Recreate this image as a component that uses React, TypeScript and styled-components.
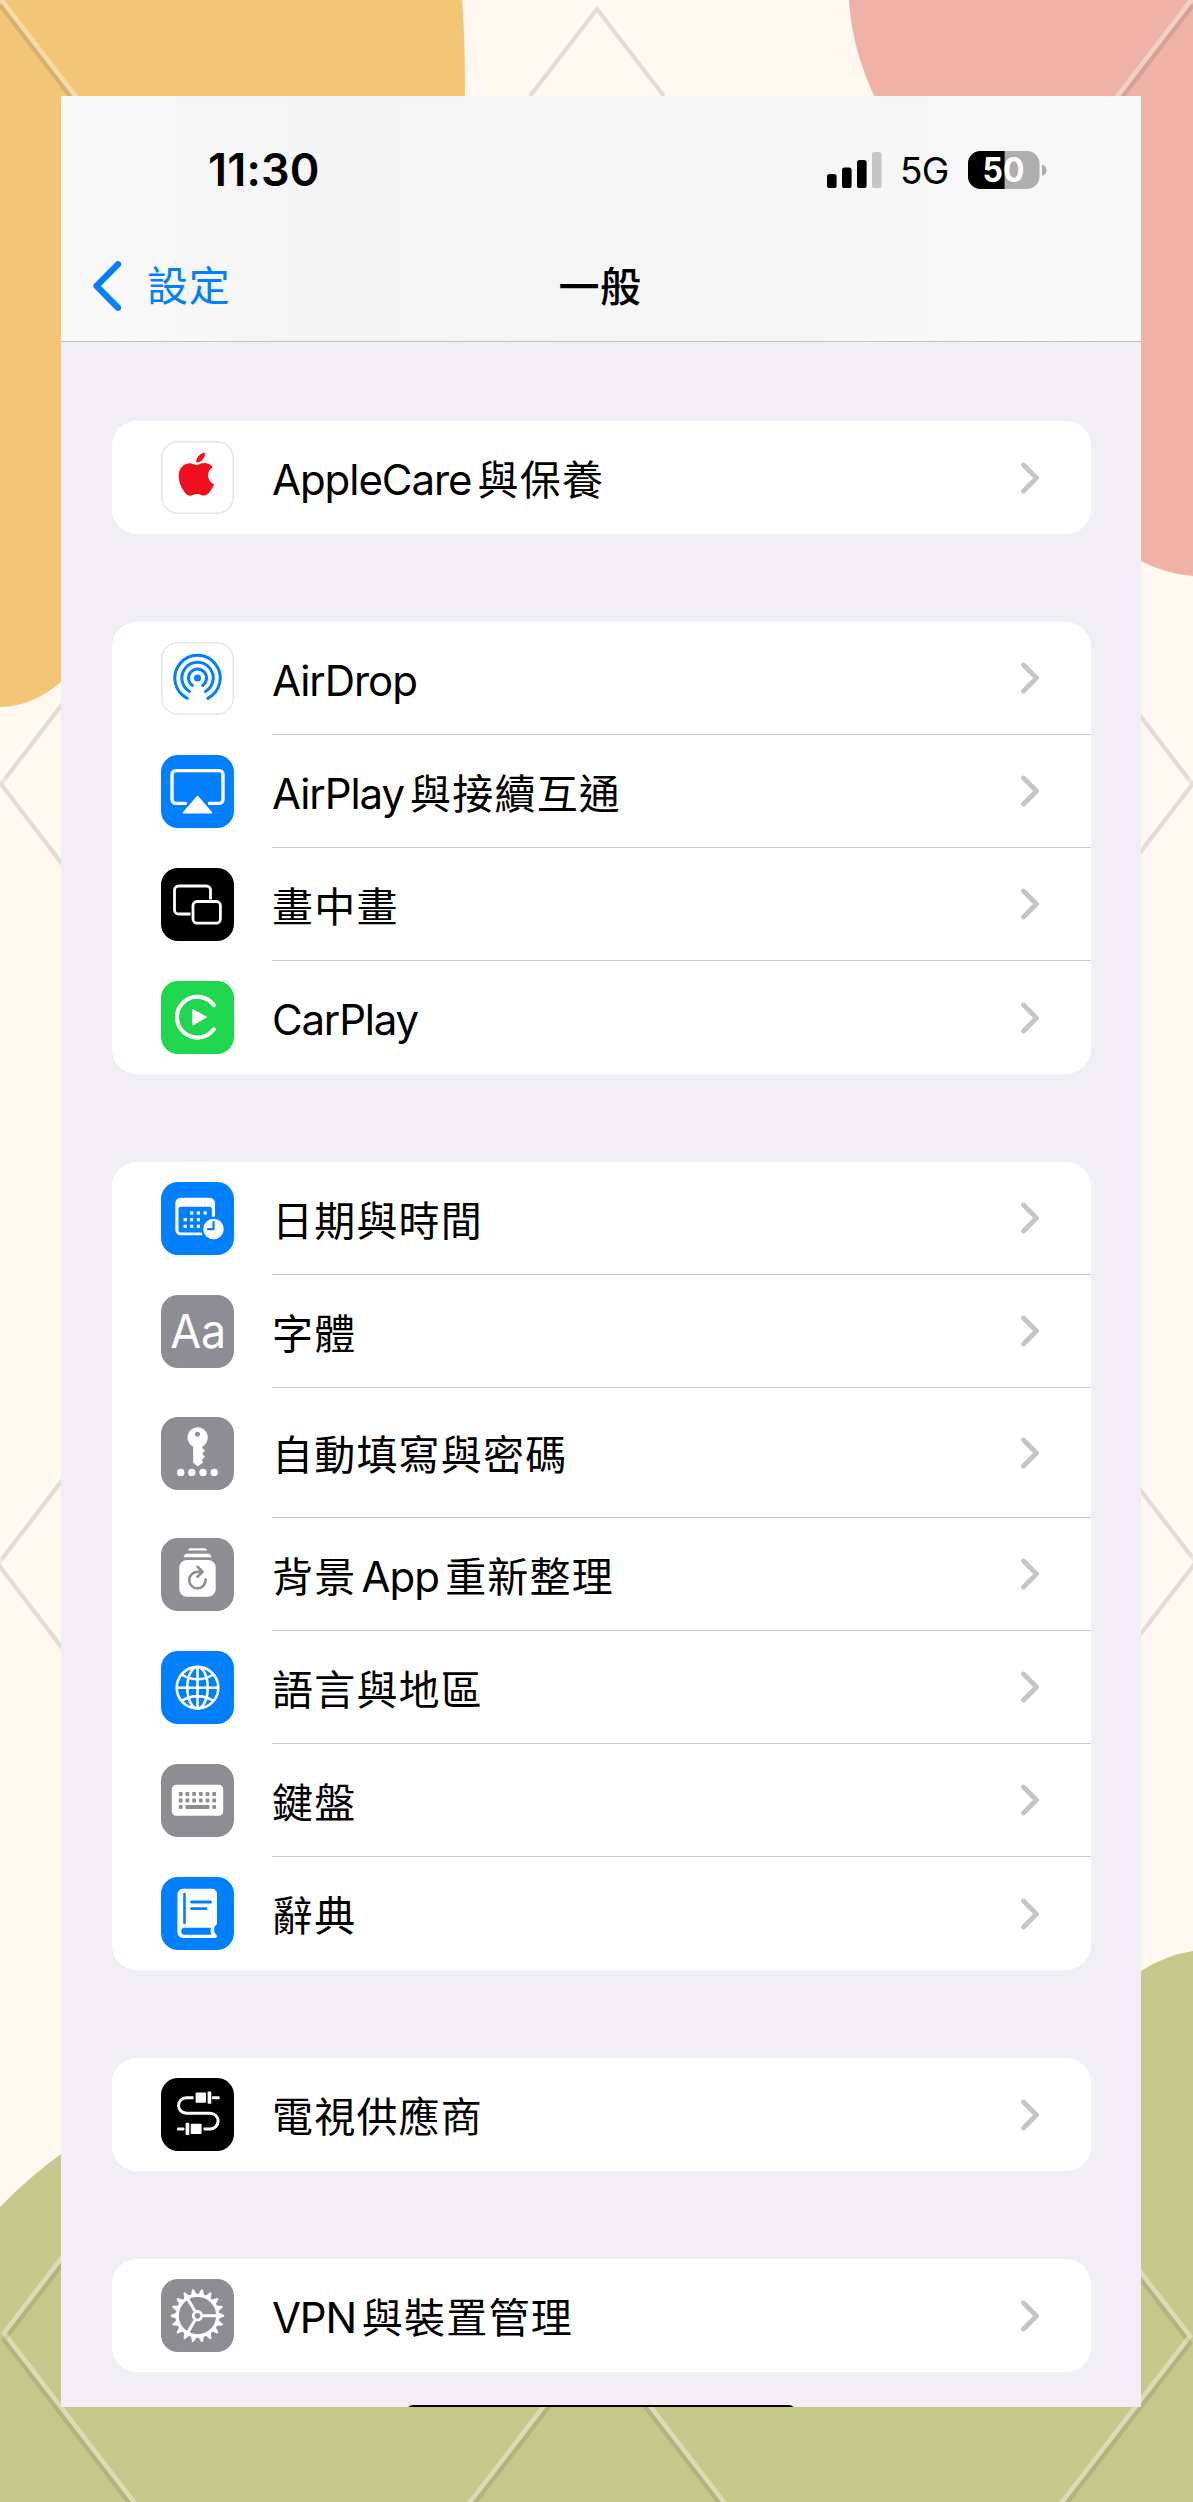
import React from "react";
import styled, { createGlobalStyle } from "styled-components";

const GlobalStyle = createGlobalStyle`
  * { box-sizing: border-box; }
  body { margin: 0; background: #fff7f0; }
`;

const sans = `Inter, "Noto Sans CJK TC", sans-serif`;

const Page = styled.div`
  position: relative;
  width: 1193px;
  height: 2502px;
  padding: 96px 52px 95px 61px;
  overflow: hidden;
  background: #fff7f0;
  font-family: ${sans};
  color: #000;
`;

const Backdrop = styled.svg`
  position: absolute;
  inset: 0;
  width: 1193px;
  height: 2502px;
`;

const Phone = styled.main`
  position: relative;
  display: flex;
  flex-direction: column;
  width: 1080px;
  height: 2311px;
  background: #f1eef5;
  overflow: hidden;
`;

const Header = styled.header`
  height: 246px;
  flex: none;
  background: linear-gradient(90deg, #f9f9f9 0, #f5f5f5 22%, #f6f6f6 70%, #f9f9fa 100%);
  border-bottom: 1px solid #bfbec4;
`;

const StatusBar = styled.div`
  display: flex;
  align-items: center;
  justify-content: space-between;
  height: 147px;
  padding: 0 93px 0 147px;
`;

const Clock = styled.div`
  font-size: 45px;
  font-weight: 600;
  letter-spacing: 0.2px;
  line-height: 60px;
`;

const StatusRight = styled.div`
  display: flex;
  align-items: center;
`;

const Network = styled.span`
  margin: 3px 0 0 18px;
  width: 68px;
  font-size: 37px;
  line-height: 44px;
  letter-spacing: -0.8px;
`;

const BatterySvg = styled.svg`
  overflow: visible;
`;

const NavBar = styled.nav`
  display: grid;
  grid-template-columns: 1fr auto 1fr;
  align-items: center;
  height: 86px;
  padding: 0 33px 0 31px;
`;

const Back = styled.a`
  display: flex;
  align-items: center;
  gap: 26px;
  color: #007fff;
  font-size: 41px;
  letter-spacing: 0.8px;
  line-height: 60px;
`;

const Title = styled.h1`
  margin: 2px 0 0;
  font-size: 41px;
  font-weight: 500;
  letter-spacing: 0.6px;
  line-height: 60px;
`;

const List = styled.div`
  display: flex;
  flex-direction: column;
  gap: 88px;
  padding: 79px 50px 0 51px;
`;

const Card = styled.section`
  border-radius: 25px;
  background: #fff;
  overflow: hidden;
`;

const Row = styled.div<{ $tall?: boolean }>`
  display: flex;
  align-items: center;
  height: ${(p) => (p.$tall ? 130 : 113)}px;
  padding-left: 49px;
`;

const Tile = styled.div<{ $bg: string; $outlined?: boolean }>`
  flex: none;
  width: 73px;
  height: 73px;
  border-radius: 17px;
  background: ${(p) => p.$bg};
  box-shadow: ${(p) => (p.$outlined ? "inset 0 0 0 1.5px #e6e6e8" : "none")};
  svg { display: block; width: 73px; height: 73px; }
`;

const RowBody = styled.div<{ $last?: boolean }>`
  display: flex;
  flex: 1;
  align-items: center;
  justify-content: space-between;
  height: 100%;
  margin-left: 38px;
  padding-right: 51px;
  border-bottom: ${(p) => (p.$last ? "none" : "1px solid #c9c9cb")};
`;

const Label = styled.div`
  padding-top: 5px;
  font-size: 41px;
  line-height: 60px;
  white-space: nowrap;
`;

const Cjk = styled.span`
  letter-spacing: 1.2px;
`;

const Latin = styled.span<{ $track: number; $before?: boolean }>`
  margin-left: ${(p) => (p.$before ? 5 : 0)}px;
  margin-right: 6px;
  font-size: 42px;
  letter-spacing: ${(p) => p.$track}px;
`;

const HomeIndicator = styled.div`
  width: 388px;
  height: 12px;
  margin: 33px auto 0;
  flex: none;
  border-radius: 6px;
  background: #000;
`;

const SignalIcon = () => (
  <svg width="55" height="36" viewBox="0 0 55 36">
    <rect x="0" y="22" width="9.6" height="14" rx="2.6" />
    <rect x="15" y="15.6" width="9.6" height="20.4" rx="2.6" />
    <rect x="30" y="8" width="9.6" height="28" rx="2.6" />
    <rect x="45" y="0" width="9.6" height="36" rx="2.6" fill="#c6c6c6" />
  </svg>
);

const BatteryIcon = () => (
  <BatterySvg width="80" height="38" viewBox="0 0 80 38">
    <defs>
      <clipPath id="charge"><rect width="36.6" height="38" /></clipPath>
    </defs>
    <rect width="71.5" height="38" rx="12.5" fill="#aeaeae" />
    <rect width="71.5" height="38" rx="12.5" clipPath="url(#charge)" />
    <path d="M74 13.4c6 1.6 6 9.8 0 11.4z" fill="#aeaeae" />
    <text x="14.5" y="31" fill="#fff" fontFamily="Inter, sans-serif" fontWeight="700" fontSize="34" textLength="42" lengthAdjust="spacingAndGlyphs">50</text>
  </BatterySvg>
);

const BackChevron = () => (
  <svg width="29" height="52" viewBox="0 0 29 52" fill="none" stroke="#007fff" strokeWidth="6.2" strokeLinecap="round" strokeLinejoin="round">
    <path d="M26 4.2 4.500 26 26 47.8" />
  </svg>
);

const Disclosure = () => (
  <svg width="20" height="32" viewBox="0 0 20 32" fill="none" stroke="#c5c5c8" strokeWidth="4.8" strokeLinecap="round" strokeLinejoin="round">
    <path d="M3.5 3 16.500 16 3.5 29" />
  </svg>
);

const AppleIcon = () => (
  <svg viewBox="0 0 73 73" fill="#ee101c">
    <path transform="translate(13.7 11.7) scale(1.8 1.79)" d="M12.152 6.896c-.948 0-2.415-1.078-3.960-1.040-2.040.027-3.910 1.183-4.961 3.014-2.117 3.675-.546 9.103 1.519 12.090 1.013 1.454 2.208 3.090 3.792 3.039 1.520-.065 2.090-.987 3.935-.987 1.831 0 2.350.987 3.960.948 1.637-.026 2.676-1.480 3.676-2.948 1.156-1.688 1.636-3.325 1.662-3.415-.039-.013-3.182-1.221-3.220-4.857-.026-3.040 2.480-4.494 2.597-4.559-1.429-2.090-3.623-2.324-4.390-2.376-2-.156-3.675 1.090-4.610 1.090zM15.530 3.830c.843-1.012 1.400-2.427 1.245-3.830-1.207.052-2.662.805-3.532 1.818-.780.896-1.454 2.338-1.273 3.714 1.338.104 2.715-.688 3.559-1.701" />
  </svg>
);

const AirDropIcon = () => (
  <svg viewBox="0 0 73 73" fill="none" stroke="#007fff" strokeWidth="3" strokeLinecap="round">
    <circle cx="36.5" cy="36" r="3.5" fill="#007fff" stroke="none" />
    <path d="M31.4 43.4a9 9 0 1 1 10.200 0" />
    <path d="M28.5 49.5a15.700 15.700 0 1 1 16 0" />
    <path d="M26.2 56.3a22.700 22.700 0 1 1 20.600 0" />
  </svg>
);

const AirPlayIcon = () => (
  <svg viewBox="0 0 73 73" fill="none" stroke="#fff" strokeWidth="3.4" strokeLinecap="round">
    <path d="M24.5 48.4H15a4 4 0 0 1-4-4V19.600a4 4 0 0 1 4-4h43a4 4 0 0 1 4 4v24.800a4 4 0 0 1-4 4h-9.500" />
    <path d="M36.5 41.5 50.500 57.800h-28z" fill="#fff" strokeWidth="1.6" strokeLinejoin="round" />
  </svg>
);

const PipIcon = () => (
  <svg viewBox="0 0 73 73" fill="none" stroke="#fff" strokeWidth="2.8" strokeLinecap="butt">
    <path d="M29.5 46H17.500a4 4 0 0 1-4-4V22a4 4 0 0 1 4-4H45.500a4 4 0 0 1 4 4v9.500" />
    <rect x="32" y="33.5" width="27.4" height="21.6" rx="4" />
  </svg>
);

const CarPlayIcon = () => (
  <svg viewBox="0 0 73 73" fill="none" stroke="#fff" strokeWidth="4.1" strokeLinecap="round">
    <path d="M52.8 24.1A20.400 20.400 0 1 0 52.800 48.300" />
    <path d="M31.8 28.8 45 36.200 31.800 43.600z" fill="#fff" strokeWidth="1.5" strokeLinejoin="round" />
  </svg>
);

const CalendarIcon = () => {
  const dots = [
    [30.7, 31], [37.4, 31], [44.2, 31],
    [24.2, 37.7], [30.7, 37.7], [37.4, 37.7],
    [24.2, 44.3], [30.7, 44.3], [37.4, 44.3],
  ];
  return (
    <svg viewBox="0 0 73 73">
      <rect x="14.3" y="15.7" width="39.7" height="37.6" rx="5.5" fill="#fff" />
      <rect x="17.5" y="24.8" width="33.4" height="25.8" rx="2.5" fill="#007fff" />
      {dots.map(([x, y]) => <rect key={`${x}-${y}`} x={x - 1.6} y={y - 1.6} width="3.2" height="3.2" fill="#fff" />)}
      <circle cx="52.5" cy="47" r="12.4" fill="#007fff" />
      <circle cx="52.5" cy="47" r="10.3" fill="#fff" />
      <path d="M52.5 40v7.200h-5.500" fill="none" stroke="#007fff" strokeWidth="2.2" strokeLinecap="round" strokeLinejoin="round" />
    </svg>
  );
};

const FontIcon = () => (
  <svg viewBox="0 0 73 73">
    <text x="9.2" y="53.3" fill="#fff" fontFamily="Inter, sans-serif" fontSize="46.500" textLength="56" lengthAdjust="spacingAndGlyphs">Aa</text>
  </svg>
);

const KeyIcon = () => (
  <svg viewBox="0 0 73 73" fill="#fff">
    <path fillRule="evenodd" d="M36.5 10.2a10.300 10.300 0 0 1 4.700 19.500v1.100l2.700 2.900-2.600 3 2.600 3-3 3.200 1.300 2.600-5.600 4-4.400-4V29.700A10.300 10.300 0 0 1 36.500 10.200zm0 4.600a2.500 2.500 0 1 0 0 5 2.500 2.500 0 0 0 0-5z" />
    {[19.7, 30.8, 42, 53.2].map((x) => <circle key={x} cx={x} cy="55.4" r="3.7" />)}
  </svg>
);

const RefreshIcon = () => (
  <svg viewBox="0 0 73 73" fill="#fff">
    <path d="M29.5 10.2h14c1.500 0 2.300 1 2.600 2.400H27c.3-1.400 1-2.400 2.500-2.400zM26 15.700h21c2 0 3 1.500 3.500 3.600h-28c.5-2.100 1.500-3.600 3.500-3.600z" />
    <rect x="18.3" y="22" width="36.4" height="36.7" rx="7.5" />
    <path d="M44.6 41.5a8.200 8.200 0 1 1-8.100-7.600h3" fill="none" stroke="#8e8d93" strokeWidth="2.6" strokeLinecap="round" />
    <path d="M36.5 28.8 41.600 33.800 36.500 38.800" fill="none" stroke="#8e8d93" strokeWidth="2.6" strokeLinecap="round" strokeLinejoin="round" />
  </svg>
);

const GlobeIcon = () => (
  <svg viewBox="0 0 73 73" fill="none" stroke="#fff" strokeWidth="2.6">
    <circle cx="36.5" cy="36.7" r="20.8" />
    <ellipse cx="36.5" cy="36.7" rx="10.2" ry="20.8" />
    <path d="M36.5 15.8v41.800M15.600 36.700h41.800M20.500 23.500q16 9.500 32 0M20.500 49.900q16-9.500 32 0" />
  </svg>
);

const KeyboardIcon = () => {
  const xs = [19.7, 26.4, 33.1, 39.8, 46.5, 53.2];
  return (
    <svg viewBox="0 0 73 73" fill="#8e8d93">
      <rect x="10.8" y="20.8" width="51.4" height="31" rx="4.5" fill="#fff" />
      {[30, 36.5].map((y) => xs.map((x) => <rect key={`${x}-${y}`} x={x - 1.9} y={y - 1.9} width="3.8" height="3.8" rx=".8" />))}
      <rect x="17.8" y="41.1" width="3.8" height="3.8" rx=".8" />
      <rect x="24.5" y="41.1" width="24" height="3.8" rx="1" />
      <rect x="51.3" y="41.1" width="3.8" height="3.8" rx=".8" />
    </svg>
  );
};

const BookIcon = () => (
  <svg viewBox="0 0 73 73" fill="none" strokeLinecap="round">
    <path d="M22 11.8h29a5 5 0 0 1 5 5V46.500c0 1.500-2.800 2.500-2.800 4.500v3.500c0 2 2.800 3 2.800 4.500 0 1.300-.8 2-2 2H22a5.600 5.600 0 0 1-5.600-5.600V17.400a5.600 5.600 0 0 1 5.600-5.600z" fill="#fff" />
    <path d="M23.7 50.7h26.500c-.8 1.200-.8 5.800.5 7H23.700a3.500 3.500 0 0 1 0-7z" fill="#007fff" />
    <path d="M23.5 17v29" stroke="#007fff" strokeWidth="2.6" />
    <path d="M30.5 25h19M30.500 31.700h14.500" stroke="#007fff" strokeWidth="2.8" />
  </svg>
);

const CableIcon = () => (
  <svg viewBox="0 0 73 73" fill="#fff">
    <path d="M32.5 19.7H25.300a7.700 7.700 0 0 0 0 15.500H49.200a7.900 7.900 0 0 1 0 15.800H42.500" fill="none" stroke="#fff" strokeWidth="3" />
    <rect x="34.6" y="14.6" width="10.4" height="10.2" rx="1" />
    <rect x="46.6" y="13.4" width="3.7" height="12.4" rx="1" />
    <rect x="51" y="18.2" width="7.6" height="3" rx="1" />
    <rect x="29.7" y="45.8" width="10.9" height="10.2" rx="1" />
    <rect x="24.6" y="44.7" width="3.7" height="12.4" rx="1" />
    <rect x="16" y="49.5" width="7.4" height="3" rx="1" />
  </svg>
);

const GearIcon = () => (
  <svg viewBox="0 0 73 73">
    <g transform="translate(36.5 36.7)" fill="none" stroke="#fff">
      {Array.from({ length: 18 }, (_, i) => (
        <path key={i} transform={`rotate(${i * 20})`} d="M20.5-3.2 25.600-1.200a1.200 1.200 0 0 1 0 2.400L20.500 3.200z" fill="#fff" stroke="none" />
      ))}
      <circle r="20.3" strokeWidth="3.4" />
      <circle r="4.2" strokeWidth="2.8" />
      {[0, 120, 240].map((a) => <path key={a} transform={`rotate(${a})`} d="M5 0H20" strokeWidth="3" />)}
    </g>
  </svg>
);

type Part = { text: string; track?: number };
type Item = { icon: React.ReactNode; bg: string; outlined?: boolean; tall?: boolean; parts: Part[] };

const blue = "#007fff";
const gray = "#8e8d93";

const groups: Item[][] = [
  [{ icon: <AppleIcon />, bg: "#fff", outlined: true, parts: [{ text: "AppleCare", track: -1.05 }, { text: "與保養" }] }],
  [
    { icon: <AirDropIcon />, bg: "#fff", outlined: true, parts: [{ text: "AirDrop", track: -1.05 }] },
    { icon: <AirPlayIcon />, bg: blue, parts: [{ text: "AirPlay", track: -1.05 }, { text: "與接續互通" }] },
    { icon: <PipIcon />, bg: "#000", parts: [{ text: "畫中畫" }] },
    { icon: <CarPlayIcon />, bg: "#1fd64f", parts: [{ text: "CarPlay", track: -1.2 }] },
  ],
  [
    { icon: <CalendarIcon />, bg: blue, parts: [{ text: "日期與時間" }] },
    { icon: <FontIcon />, bg: gray, parts: [{ text: "字體" }] },
    { icon: <KeyIcon />, bg: gray, tall: true, parts: [{ text: "自動填寫與密碼" }] },
    { icon: <RefreshIcon />, bg: gray, parts: [{ text: "背景" }, { text: "App", track: -0.9 }, { text: "重新整理" }] },
    { icon: <GlobeIcon />, bg: blue, parts: [{ text: "語言與地區" }] },
    { icon: <KeyboardIcon />, bg: gray, parts: [{ text: "鍵盤" }] },
    { icon: <BookIcon />, bg: blue, parts: [{ text: "辭典" }] },
  ],
  [{ icon: <CableIcon />, bg: "#000", parts: [{ text: "電視供應商" }] }],
  [{ icon: <GearIcon />, bg: gray, parts: [{ text: "VPN", track: -1.2 }, { text: "與裝置管理" }] }],
];

const lattice =
  "M530 89 597 2 664 89M0-2 80 102M1193-2 1113 102M70 687 1 777 70 867M1132 698 1192.500 777 1132 856M70 1463-2 1557 70 1651M1132 1472 1196 1555 1132 1638M70 2247 4 2333 140 2510M1132 2261 1190 2336 1056 2510M464 2510 597 2337 730 2510";

const Wallpaper = () => (
  <Backdrop viewBox="0 0 1193 2502">
    <path d="M0 0H462C465 40 465 70 465 110L400 600 61 682C42 698 22 707 0 707z" fill="#f3c577" />
    <path d="M849 0C851 34 860 68 881 110L1000 420 1141 561Q1166 574 1193 576V0z" fill="#eeb3a6" />
    <path d="M0 2207Q28 2178 61 2154L500 2000 1100 2000 1141 1971Q1166 1955 1193 1951V2502H0z" fill="#c3c98a" />
    <path d={lattice} transform="translate(0 7)" fill="none" stroke="rgba(70,60,60,.15)" strokeWidth="4.4" />
    <path d={lattice} fill="none" stroke="rgba(255,255,245,.38)" strokeWidth="4.6" />
  </Backdrop>
);

const App = () => (
  <>
    <GlobalStyle />
    <Page>
      <Wallpaper />
      <Phone>
        <Header>
          <StatusBar>
            <Clock>11:30</Clock>
            <StatusRight>
              <SignalIcon />
              <Network>5G</Network>
              <BatteryIcon />
            </StatusRight>
          </StatusBar>
          <NavBar>
            <Back><BackChevron />設定</Back>
            <Title>一般</Title>
          </NavBar>
        </Header>
        <List>
          {groups.map((items, g) => (
            <Card key={g}>
              {items.map((item, i) => (
                <Row key={i} $tall={item.tall}>
                  <Tile $bg={item.bg} $outlined={item.outlined}>{item.icon}</Tile>
                  <RowBody $last={i === items.length - 1}>
                    <Label>
                      {item.parts.map((p, n) =>
                        p.track !== undefined
                          ? <Latin key={n} $track={p.track} $before={n > 0}>{p.text}</Latin>
                          : <Cjk key={n}>{p.text}</Cjk>
                      )}
                    </Label>
                    <Disclosure />
                  </RowBody>
                </Row>
              ))}
            </Card>
          ))}
        </List>
        <HomeIndicator />
      </Phone>
    </Page>
  </>
);

export default App;
